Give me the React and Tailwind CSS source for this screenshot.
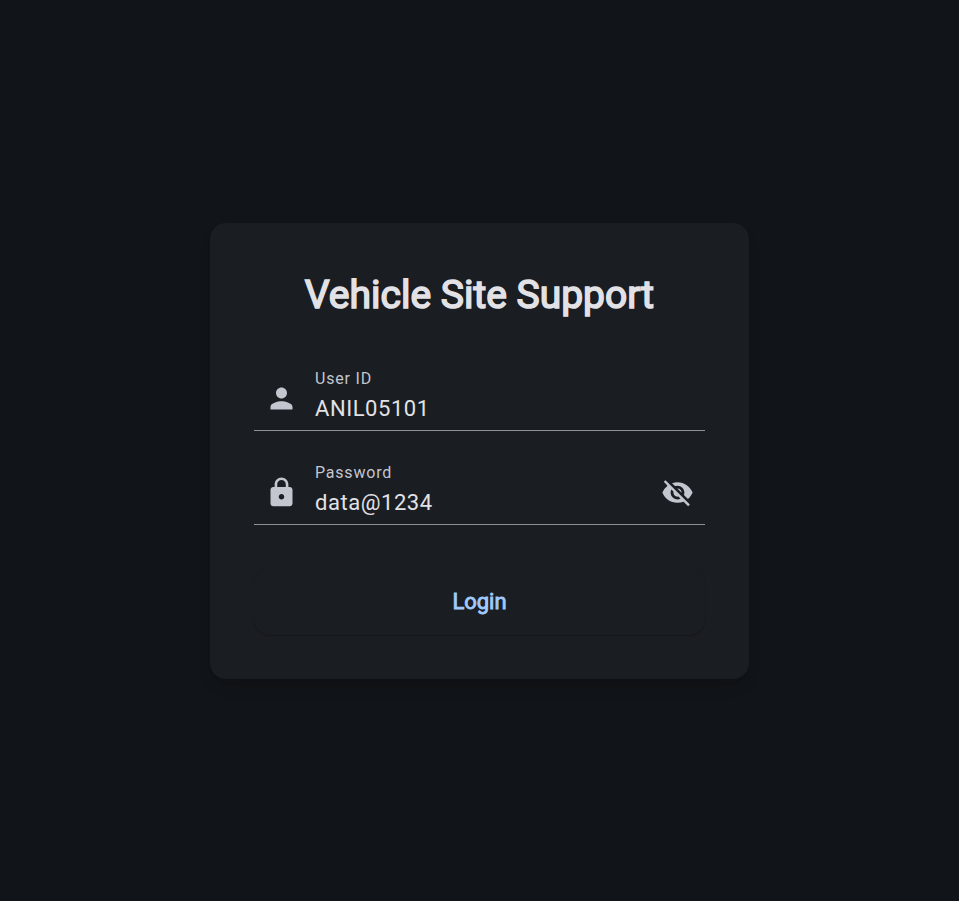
import { useState } from "react";
import { MdPerson, MdLock, MdVisibilityOff, MdVisibility } from "react-icons/md";

function Field({ id, label, icon: Icon, children, ...props }) {
  return (
    <div className="flex h-[72px] items-center border-b border-[#8d9199] px-[11px] pt-1">
      <Icon className="mt-1 size-[33px] shrink-0 text-[#c3c6cf]" aria-hidden="true" />
      <div className="ml-[17px] flex min-w-0 flex-1 flex-col">
        <label htmlFor={id} className="text-base leading-6 tracking-wider text-[#c3c6cf]">
          {label}
        </label>
        <input
          id={id}
          className="h-[34px] w-full bg-transparent text-[22px] tracking-wide text-[#e2e2e6] outline-none"
          {...props}
        />
      </div>
      {children}
    </div>
  );
}

export default function App() {
  const [visible, setVisible] = useState(true);
  const Eye = visible ? MdVisibilityOff : MdVisibility;

  return (
    <main className="flex min-h-screen items-center justify-center bg-[#111418] p-4 font-[Roboto,sans-serif]">
      <form
        className="w-full max-w-[539px] rounded-2xl bg-[#1a1d21] p-11 shadow-lg"
        onSubmit={(e) => e.preventDefault()}
      >
        <h1 className="text-center text-[39px] leading-14 font-normal text-[#e2e2e6] [-webkit-text-stroke:0.04em]">
          Vehicle Site Support
        </h1>
        <div className="mt-9 flex flex-col gap-[22px]">
          <Field id="user" label="User ID" icon={MdPerson} defaultValue="ANIL05101" />
          <Field
            id="password"
            label="Password"
            icon={MdLock}
            type={visible ? "text" : "password"}
            defaultValue="data@1234"
          >
            <button
              type="button"
              className="mt-1"
              aria-label="Toggle password visibility"
              onClick={() => setVisible(!visible)}
            >
              <Eye className="size-[33px] text-[#c3c6cf]" />
            </button>
          </Field>
        </div>
        <button
          type="submit"
          className="mt-11 h-[66px] w-full rounded-2xl bg-[#1a1d21] text-[22px] font-normal text-[#a0caff] shadow-[0_1px_1px_#17181b] [-webkit-text-stroke:0.04em]"
        >
          Login
        </button>
      </form>
    </main>
  );
}
